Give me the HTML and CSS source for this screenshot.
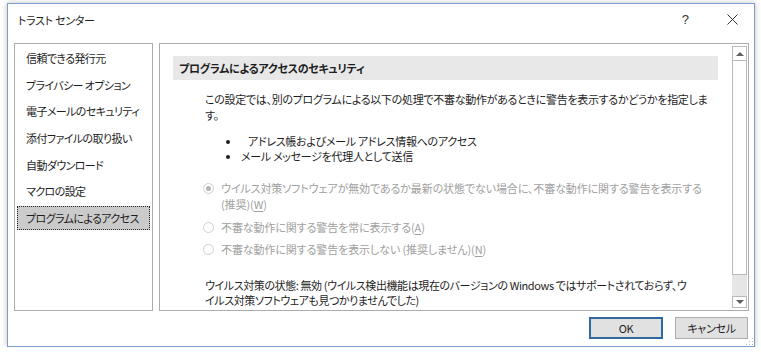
FILE: index.html
```html
<!DOCTYPE html>
<html lang="ja">
	<head>
		<meta charset="utf-8">
		<title>トラスト センター</title>
		<link rel="stylesheet" href="styles.css">
	</head>
	<body>
		<div class="dialog">
			<div class="titlebar">
				<span class="title">トラスト センター</span>
				<span class="help">?</span>
				<span class="close">
					<svg width="11" height="11" viewBox="0 0 11 11"><path d="M0.5 0.5 L10.5 10.5 M10.5 0.5 L0.5 10.5" stroke="#333" stroke-width="1" fill="none"/></svg>
				</span>
			</div>
			<div class="body">
				<ul class="nav">
					<li>信頼できる発行元</li>
					<li>プライバシー オプション</li>
					<li>電子メールのセキュリティ</li>
					<li>添付ファイルの取り扱い</li>
					<li>自動ダウンロード</li>
					<li>マクロの設定</li>
					<li class="selected">プログラムによるアクセス</li>
				</ul>
				<div class="panel">
					<div class="content">
						<div class="section-head">プログラムによるアクセスのセキュリティ</div>
						<p class="desc">この設定では、別のプログラムによる以下の処理で不審な動作があるときに警告を表示するかどうかを指定しま<br>す。</p>
						<ul class="bullets">
							<li><span class="pad"></span>アドレス帳およびメール アドレス情報へのアクセス</li>
							<li>メール メッセージを代理人として送信</li>
						</ul>
						<div class="options">
							<div class="option">
								<span class="radio checked"></span>
								<span class="label">ウイルス対策ソフトウェアが無効であるか最新の状態でない場合に、不審な動作に関する警告を表示する<br>(推奨)(<u>W</u>)</span>
							</div>
							<div class="option">
								<span class="radio"></span>
								<span class="label">不審な動作に関する警告を常に表示する(<u>A</u>)</span>
							</div>
							<div class="option">
								<span class="radio"></span>
								<span class="label">不審な動作に関する警告を表示しない (推奨しません)(<u>N</u>)</span>
							</div>
						</div>
						<p class="status">ウイルス対策の状態: 無効 (ウイルス検出機能は現在のバージョンの Windows ではサポートされておらず、ウ<br>イルス対策ソフトウェアも見つかりませんでした)</p>
					</div>
					<div class="scrollbar">
						<div class="sb-btn up"><span></span></div>
						<div class="sb-thumb"></div>
						<div class="sb-track"></div>
						<div class="sb-btn down"><span></span></div>
					</div>
				</div>
			</div>
			<div class="buttons">
				<button class="btn default">OK</button>
				<button class="btn">キャンセル</button>
			</div>
			<div class="grip"></div>
		</div>
	</body>
</html>
```

FILE: styles.css
```css
html, body {
	margin: 0;
	padding: 0;
	background: #ffffff;
}
body {
	font-family: "Noto Sans CJK JP", "Noto Sans", sans-serif;
	font-size: 11px;
	letter-spacing: -0.3px;
	font-feature-settings: "palt";
	color: #1e1e1e;
	padding: 3px 0 0 7px;
}
.dialog {
	position: relative;
	width: 746px;
	height: 342px;
	border: 1px solid #7d9fc7;
	background: #ffffff;
	box-shadow: 0 0 6px rgba(0, 0, 0, 0.25);
	display: flex;
	flex-direction: column;
}
.titlebar {
	height: 39px;
	display: flex;
	align-items: flex-start;
	padding: 8px 0 0 10px;
	line-height: 16px;
	box-sizing: border-box;
	flex: none;
}
.title {
	flex: 1;
}
.help {
	font-family: "Liberation Sans", sans-serif;
	font-size: 13px;
	letter-spacing: 0;
	color: #333;
	margin-right: 38px;
}
.close {
	display: flex;
	width: 11px;
	margin: 2px 16px 0 0;
}
.body {
	display: flex;
	gap: 6px;
	padding: 0 5px 0 6px;
	height: 268px;
	flex: none;
}
.nav {
	list-style: none;
	margin: 0;
	padding: 2px 2px 0 2px;
	width: 133px;
	border: 1px solid #acacac;
	letter-spacing: -0.6px;
}
.nav li {
	height: 22px;
	line-height: 22px;
	margin-bottom: 2.67px;
	padding-left: 8px;
	white-space: nowrap;
	border: 1px solid transparent;
}
.nav li.selected {
	background: #cbcbcb;
	border: 1px dotted #222;
}
.panel {
	flex: 1;
	display: flex;
	border: 1px solid #acacac;
	overflow: hidden;
}
.content {
	flex: 1;
	overflow: hidden;
	padding: 12px 14px 0 13px;
	white-space: nowrap;
}
.section-head {
	background: #e8e8e8;
	height: 24px;
	line-height: 24px;
	padding-left: 6px;
	font-weight: bold;
}
.desc {
	margin: 11px 0 0 32px;
	line-height: 16px;
}
.bullets {
	margin: 11px 0 0 0;
	padding: 0 0 0 68px;
	line-height: 15px;
}
.bullets li::marker {
	font-size: 10px;
}
.bullets .pad {
	display: inline-block;
	width: 7px;
}
.options {
	margin-top: 16px;
	padding-left: 30px;
	color: #a0a0a0;
	letter-spacing: -0.1px;
}
.option {
	display: flex;
	align-items: flex-start;
	margin-bottom: 6.5px;
	line-height: 16px;
}
.radio {
	flex: none;
	width: 11px;
	height: 11px;
	border: 1px solid #cfcfcf;
	border-radius: 50%;
	box-sizing: border-box;
	margin: 3px 7px 0 0;
	position: relative;
}
.radio.checked::after {
	content: "";
	position: absolute;
	left: 2px;
	top: 2px;
	width: 5px;
	height: 5px;
	border-radius: 50%;
	background: #b4b4b4;
}
.label u {
	text-underline-offset: 2px;
}
.status {
	margin: 21px 0 0 32px;
	line-height: 15px;
	letter-spacing: -0.4px;
}
.scrollbar {
	width: 15px;
	margin: 2px 1px 2px 0;
	display: flex;
	flex-direction: column;
	flex: none;
}
.sb-btn {
	height: 15px;
	border: 1px solid #b9b9b9;
	box-sizing: border-box;
	display: flex;
	align-items: center;
	justify-content: center;
	background: #fff;
}
.sb-btn span {
	width: 0;
	height: 0;
	border-left: 4px solid transparent;
	border-right: 4px solid transparent;
}
.sb-btn.up span {
	border-bottom: 4px solid #606060;
}
.sb-btn.down {
	height: 12px;
}
.sb-btn.down span {
	border-top: 4px solid #606060;
}
.sb-thumb {
	height: 214px;
	border: 1px solid #b9b9b9;
	border-top: none;
	box-sizing: border-box;
	background: #fff;
}
.sb-track {
	flex: 1;
	background: #e6e6e6;
}
.buttons {
	display: flex;
	justify-content: flex-end;
	gap: 12px;
	padding: 6px 6px 0 0;
}
.btn {
	font-family: inherit;
	font-size: 11px;
	letter-spacing: -0.3px;
	font-feature-settings: "palt";
	color: #1e1e1e;
	background: #e1e1e1;
	border: 1px solid #adadad;
	width: 73px;
	height: 22px;
	padding: 0;
	box-sizing: border-box;
}
.btn.default {
	border: 2px solid #2f6a9e;
	width: 74px;
}
.grip {
	position: absolute;
	right: 1px;
	bottom: 1px;
	width: 8px;
	height: 8px;
	background-image: radial-gradient(circle, #b8b8b8 0.8px, transparent 1px);
	background-size: 3px 3px;
	clip-path: polygon(100% 0, 100% 100%, 0 100%);
}
```
